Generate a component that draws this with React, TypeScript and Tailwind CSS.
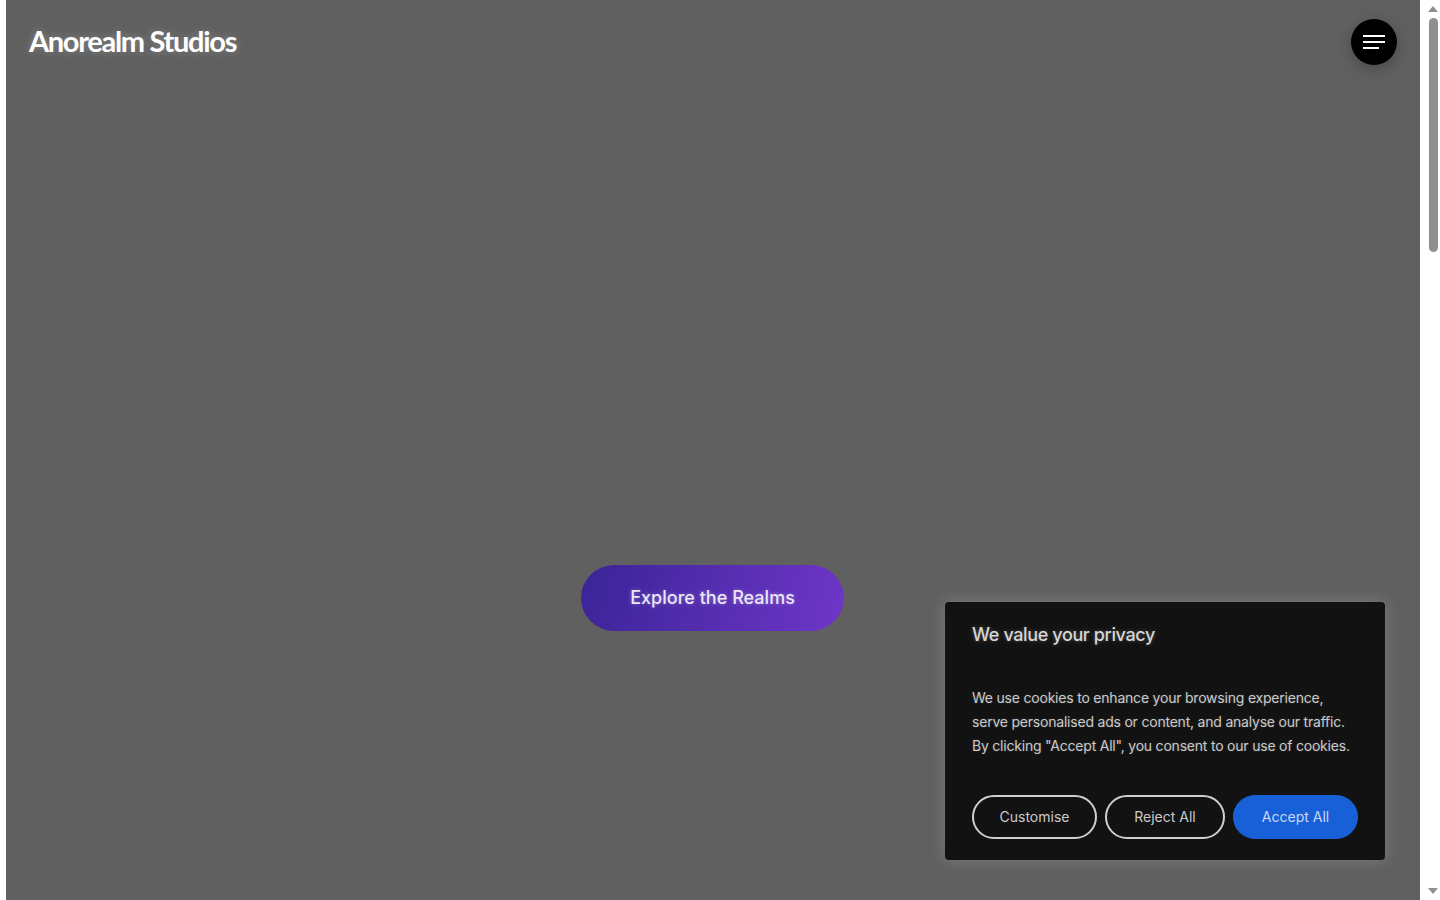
export default function App() {
  return (
    <div className="flex h-[900px] overflow-hidden bg-white font-['Inter',sans-serif]">
      <div className="w-[6px] shrink-0" />

      <main className="relative flex-1 bg-[#606060]">
        {/* Header */}
        <header className="flex items-center justify-between pl-[23px] pr-[23px] pt-[19px]">
          <div className="pb-[2px] font-['Lato',sans-serif] text-[29px] font-bold leading-[44px] tracking-[-1.3px] text-white [text-shadow:0_0_8px_rgba(255,255,255,0.25)]">
            Anorealm Studios
          </div>
          <button className="flex h-[46px] w-[46px] flex-col items-center justify-center rounded-full bg-black shadow-[0_4px_14px_rgba(0,0,0,0.25)]">
            <span className="h-[2px] w-[22px] bg-white" />
            <span className="mt-[4px] h-[2px] w-[22px] bg-white" />
            <span className="mt-[4px] h-[2px] w-[16px] -translate-x-[3px] bg-white" />
          </button>
        </header>

        {/* Hero */}
        <div className="mr-[1px] mt-[500px] flex justify-center">
          <button className="h-[66px] w-[263px] rounded-full bg-[linear-gradient(105deg,#3a2497,#6f36c8)] pb-[1px] text-[18px] font-medium tracking-[0.02px] text-[#ebe6f7] [text-shadow:0_0_4px_rgba(255,255,255,0.3)]">
            Explore the Realms
          </button>
        </div>

        {/* Cookie banner */}
        <div className="absolute left-[939px] top-[602px] h-[258px] w-[440px] rounded-[4px] bg-[#121212] px-[27px] pt-[21px] shadow-[0_0_16px_rgba(255,255,255,0.2)]">
          <h2 className="text-[18px] font-medium leading-[24px] tracking-[-0.38px] text-[#d6d6d6] [text-shadow:0_0_4px_rgba(255,255,255,0.25)]">
            We value your privacy
          </h2>
          <p className="mt-[39px] text-[14px] leading-[24px] tracking-[-0.21px] text-[#cacaca] [text-shadow:0_0_3px_rgba(255,255,255,0.15)]">
            We use cookies to enhance your browsing experience,
            <br />
            serve personalised ads or content, and analyse our traffic.
            <br />
            By clicking "Accept All", you consent to our use of cookies.
          </p>
          <div className="mt-[37px] flex gap-2">
            <button className="h-[44px] w-[125px] rounded-full border-2 border-[#cfcfcf] pb-[1px] text-[14px] text-[#cacaca]">Customise</button>
            <button className="h-[44px] w-[120px] rounded-full border-2 border-[#cfcfcf] pb-[1px] text-[14px] text-[#cacaca]">Reject All</button>
            <button className="h-[44px] w-[125px] rounded-full bg-[#1860d8] pb-[1px] text-[14px] text-[#c9d9f2]">Accept All</button>
          </div>
        </div>
      </main>

      {/* Scrollbar */}
      <div className="flex w-5 shrink-0 flex-col items-center pl-[6px]">
        <svg className="mt-[6px] shrink-0" width="10" height="6" viewBox="0 0 10 6"><path d="M5 0l5 6H0z" fill="#8f8f8f" /></svg>
        <div className="mt-[6px] h-[234px] w-[9px] rounded-full bg-[#8f8f8f]" />
        <svg className="mt-[636px] shrink-0" width="10" height="6" viewBox="0 0 10 6"><path d="M5 6l5-6H0z" fill="#8f8f8f" /></svg>
      </div>
    </div>
  );
}
